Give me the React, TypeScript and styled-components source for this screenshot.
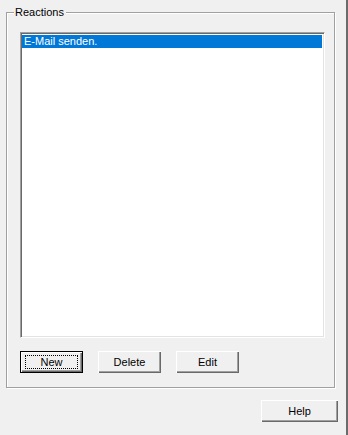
import React, { FC } from 'react';
import styled, { createGlobalStyle } from 'styled-components';

const GlobalStyle = createGlobalStyle`
  html, body {
    margin: 0;
    padding: 0;
    background: #f0f0f0;
  }
  body {
    font-family: "Liberation Sans", Arial, sans-serif;
    font-size: 11px;
    color: #000;
  }
`;

const reactions = ['E-Mail senden.'];

const App: FC = () => {
  return (
    <Dialog>
      <GlobalStyle />
      <Group>
        <Legend>Reactions</Legend>
        <GroupBody>
          <ListBox>
            {reactions.map((reaction, i) => (
              <ListItem key={reaction} selected={i === 0}>
                {reaction}
              </ListItem>
            ))}
          </ListBox>
          <ButtonRow>
            <Button isDefault>
              <FocusRect>New</FocusRect>
            </Button>
            <Button>Delete</Button>
            <Button>Edit</Button>
          </ButtonRow>
        </GroupBody>
      </Group>
      <Footer>
        <HelpButton>Help</HelpButton>
      </Footer>
    </Dialog>
  );
};

export default App;

const Dialog = styled.div`
  box-sizing: border-box;
  width: 348px;
  height: 435px;
  border-right: 2px solid #6b6b6b;
  background: #f0f0f0;
  display: flex;
  flex-direction: column;
  overflow: hidden;
`;

const Group = styled.fieldset`
  box-sizing: border-box;
  width: 329px;
  margin: 6px 0 0 6px;
  padding: 0;
  border: 1px solid #a0a0a0;
  box-shadow: inset 1px 1px 0 #fff, 1px 1px 0 #fff;
  min-inline-size: 0;
`;

const Legend = styled.legend`
  margin-left: 7px;
  padding: 0 2px 0 1px;
  background: #f0f0f0;
  font-size: 11px;
  line-height: 13px;
  height: 13px;
`;

const GroupBody = styled.div`
  display: flex;
  flex-direction: column;
  padding: 13px 0 14px 13px;
`;

const ListBox = styled.div`
  box-sizing: border-box;
  width: 305px;
  height: 306px;
  background: #fff;
  border-style: solid;
  border-width: 1px;
  border-color: #a0a0a0 #fff #fff #a0a0a0;
  box-shadow: inset 1px 1px 0 #696969, inset -1px -1px 0 #e3e3e3;
  padding: 2px 2px 2px 1px;
`;

const ListItem = styled.div<{ selected?: boolean }>`
  height: 13px;
  line-height: 13px;
  padding-left: 2px;
  white-space: nowrap;
  background: ${p => (p.selected ? '#0078d7' : 'transparent')};
  color: ${p => (p.selected ? '#fff' : '#000')};
`;

const ButtonRow = styled.div`
  display: flex;
  gap: 15px;
  margin-top: 13px;
`;

const Button = styled.button<{ isDefault?: boolean }>`
  box-sizing: border-box;
  width: 63px;
  height: 22px;
  padding: 0;
  display: flex;
  align-items: center;
  justify-content: center;
  font-family: "Liberation Sans", Arial, sans-serif;
  font-size: 11px;
  color: #000;
  background: #f0f0f0;
  border: 1px solid ${p => (p.isDefault ? '#000' : 'transparent')};
  box-shadow: ${p =>
    p.isDefault
      ? 'inset 1px 1px 0 #fff, inset -1px -1px 0 #696969, inset -2px -2px 0 #a0a0a0'
      : 'inset 1px 1px 0 #fff, inset -1px -1px 0 #696969, inset -2px -2px 0 #a0a0a0'};
  ${p => (p.isDefault ? '' : 'border: none;')}
`;

const FocusRect = styled.span`
  box-sizing: border-box;
  width: 53px;
  height: 14px;
  display: flex;
  align-items: center;
  justify-content: center;
  border: 1px dotted #000;
`;

const Footer = styled.div`
  display: flex;
  justify-content: flex-end;
  padding: 12px 8px 0 0;
`;

const HelpButton = styled(Button)`
  width: 77px;
  height: 22px;
`;
